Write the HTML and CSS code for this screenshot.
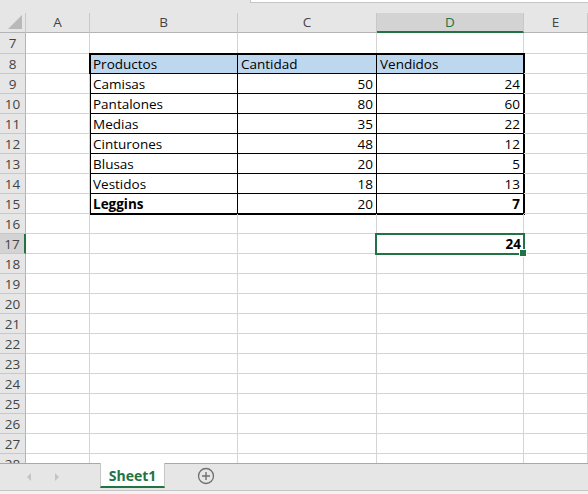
FILE: index.html
```html
<!DOCTYPE html>
<html lang="es">
<head>
  <meta charset="UTF-8">
  <title>Sheet1</title>
  <link rel="stylesheet" href="styles.css">
</head>
<body>
  <div class="sheet">
    <div class="topbar"><div class="formula"></div></div>
    <div class="grid">
      <!-- encabezados de columna -->
      <div class="hd corner"><span class="tri"></span></div>
      <div class="hd">A</div>
      <div class="hd">B</div>
      <div class="hd">C</div>
      <div class="hd sel-col">D</div>
      <div class="hd">E</div>

      <!-- fila 7 -->
      <div class="rh r7">7</div><div class="c r7"></div><div class="c r7"></div><div class="c r7"></div><div class="c r7"></div><div class="c r7"></div>

      <!-- filas 8 a 15: columna A, tabla, columna E -->
      <div class="rh">8</div><div class="c"></div>
      <div class="tabla">
        <div class="t th">Productos</div><div class="t th">Cantidad</div><div class="t th">Vendidos</div>
        <div class="t">Camisas</div><div class="t n">50</div><div class="t n">24</div>
        <div class="t">Pantalones</div><div class="t n">80</div><div class="t n">60</div>
        <div class="t">Medias</div><div class="t n">35</div><div class="t n">22</div>
        <div class="t">Cinturones</div><div class="t n">48</div><div class="t n">12</div>
        <div class="t">Blusas</div><div class="t n">20</div><div class="t n">5</div>
        <div class="t">Vestidos</div><div class="t n">18</div><div class="t n">13</div>
        <div class="t b">Leggins</div><div class="t n">20</div><div class="t n b">7</div>
      </div>
      <div class="c"></div>
      <div class="rh">9</div><div class="c"></div><div class="c"></div>
      <div class="rh">10</div><div class="c"></div><div class="c"></div>
      <div class="rh">11</div><div class="c"></div><div class="c"></div>
      <div class="rh">12</div><div class="c"></div><div class="c"></div>
      <div class="rh">13</div><div class="c"></div><div class="c"></div>
      <div class="rh">14</div><div class="c"></div><div class="c"></div>
      <div class="rh">15</div><div class="c"></div><div class="c"></div>

      <div class="rh">16</div><div class="c"></div><div class="c"></div><div class="c"></div><div class="c"></div><div class="c"></div>
      <div class="rh sel-row">17</div><div class="c"></div><div class="c"></div><div class="c"></div><div class="c n b activa">24</div><div class="c"></div>
      <div class="rh">18</div><div class="c"></div><div class="c"></div><div class="c"></div><div class="c"></div><div class="c"></div>
      <div class="rh">19</div><div class="c"></div><div class="c"></div><div class="c"></div><div class="c"></div><div class="c"></div>
      <div class="rh">20</div><div class="c"></div><div class="c"></div><div class="c"></div><div class="c"></div><div class="c"></div>
      <div class="rh">21</div><div class="c"></div><div class="c"></div><div class="c"></div><div class="c"></div><div class="c"></div>
      <div class="rh">22</div><div class="c"></div><div class="c"></div><div class="c"></div><div class="c"></div><div class="c"></div>
      <div class="rh">23</div><div class="c"></div><div class="c"></div><div class="c"></div><div class="c"></div><div class="c"></div>
      <div class="rh">24</div><div class="c"></div><div class="c"></div><div class="c"></div><div class="c"></div><div class="c"></div>
      <div class="rh">25</div><div class="c"></div><div class="c"></div><div class="c"></div><div class="c"></div><div class="c"></div>
      <div class="rh">26</div><div class="c"></div><div class="c"></div><div class="c"></div><div class="c"></div><div class="c"></div>
      <div class="rh">27</div><div class="c"></div><div class="c"></div><div class="c"></div><div class="c"></div><div class="c"></div>
      <div class="rh">28</div><div class="c"></div><div class="c"></div><div class="c"></div><div class="c"></div><div class="c"></div>
    </div>
  </div>

  <div class="tabs">
    <div class="nav">
      <span class="arrow left"></span>
      <span class="arrow right"></span>
    </div>
    <div class="tab">Sheet1</div>
    <div class="add">
      <svg width="18" height="18" viewBox="0 0 18 18">
        <circle cx="9" cy="9" r="7.5" fill="none" stroke="#6f6f6f" stroke-width="1.3"/>
        <path d="M9 5v8M5 9h8" stroke="#6f6f6f" stroke-width="1.4"/>
      </svg>
    </div>
  </div>
  <div class="status"></div>
</body>
</html>
```

FILE: styles.css
```css
* {
  margin: 0;
  padding: 0;
  box-sizing: border-box;
}
body {
  width: 588px;
  height: 494px;
  overflow: hidden;
  background: #f3f3f3;
  font-family: "Open Sans", sans-serif;
  font-size: 13.5px;
  color: #000;
}
.sheet {
  height: 463px;
  overflow: hidden;
  background: #fff;
}
.topbar {
  height: 13px;
  background: #e6e6e6;
  position: relative;
}
.formula {
  margin-left: 250px;
  height: 3px;
  background: #fff;
  border-left: 1px solid #c6c6c6;
  border-bottom: 1px solid #c6c6c6;
}
.grid {
  display: grid;
  grid-template-columns: 26px 64px 148px 139px 147px 64px;
  grid-template-rows: 20px 21px repeat(21, 20px);
}
.hd {
  background: #e6e6e6;
  border-right: 1px solid #c8c8c8;
  border-bottom: 1px solid #b4b4b4;
  color: #444;
  font-size: 13.5px;
  text-align: center;
  line-height: 19px;
}
.corner {
  position: relative;
}
.tri {
  position: absolute;
  right: 3px;
  bottom: 3px;
  width: 0;
  height: 0;
  border-left: 14px solid transparent;
  border-bottom: 14px solid #b9b9b9;
}
.sel-col {
  background: #d3d3d3;
  color: #217346;
  border-bottom: 2px solid #217346;
}
.rh {
  background: #e6e6e6;
  border-right: 1px solid #b4b4b4;
  border-bottom: 1px solid #c8c8c8;
  color: #444;
  font-size: 13.5px;
  text-align: center;
  line-height: 20px;
}
.rh.r7 {
  line-height: 21px;
}
.sel-row {
  background: #d3d3d3;
  border-right: 2px solid #217346;
}
.c {
  border-right: 1px solid #d4d4d4;
  border-bottom: 1px solid #d4d4d4;
  line-height: 20px;
  padding: 0 2px;
  white-space: nowrap;
}
.tabla {
  grid-column: 3 / 6;
  grid-row: 3 / 11;
  display: grid;
  grid-template-columns: 148px 139px 147px;
  grid-template-rows: repeat(8, 20px);
  outline: 2px solid #000;
  outline-offset: -1px;
}
.t {
  border-right: 1px solid #000;
  border-bottom: 1px solid #000;
  line-height: 20px;
  padding: 0 3px;
  white-space: nowrap;
}
.th {
  background: #bdd7ee;
}
.n {
  text-align: right;
}
.b {
  font-weight: bold;
}
.activa {
  position: relative;
}
.activa::before {
  content: "";
  position: absolute;
  top: -1px;
  left: -2px;
  right: -2px;
  bottom: -2px;
  border: 2px solid #217346;
}
.activa::after {
  content: "";
  position: absolute;
  right: -4px;
  bottom: -4px;
  width: 6px;
  height: 6px;
  background: #217346;
  border: 1px solid #fff;
}
.tabs {
  height: 28px;
  background: #e6e6e6;
  border-top: 1px solid #a8a8a8;
  border-bottom: 1px solid #c6c6c6;
  display: flex;
  align-items: stretch;
}
.nav {
  width: 100px;
  display: flex;
  align-items: center;
  padding-left: 27px;
  gap: 24px;
}
.arrow {
  width: 0;
  height: 0;
  border-top: 4px solid transparent;
  border-bottom: 4px solid transparent;
}
.arrow.left {
  border-right: 4px solid #c4c4c4;
}
.arrow.right {
  border-left: 4px solid #c4c4c4;
}
.tab {
  width: 65px;
  margin-top: -1px;
  background: #fff;
  border-left: 1px solid #c6c6c6;
  border-right: 1px solid #c6c6c6;
  border-bottom: 2px solid #217346;
  color: #217346;
  font-weight: bold;
  font-size: 14px;
  text-align: center;
  line-height: 26px;
  height: 25px;
}
.add {
  margin-left: 32px;
  display: flex;
  align-items: center;
  padding-bottom: 2px;
}
.status {
  height: 3px;
  background: #f3f3f3;
}
```
